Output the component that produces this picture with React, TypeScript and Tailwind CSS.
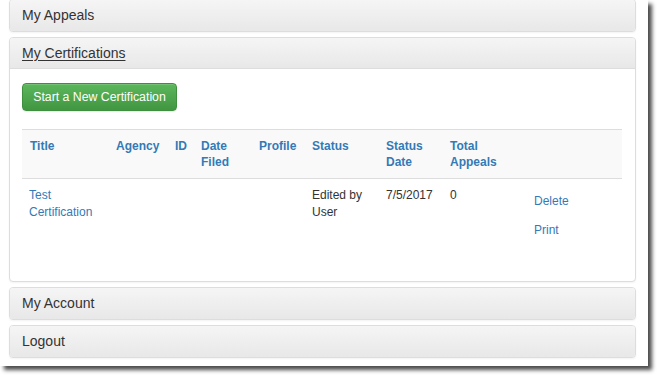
import React from "react";

function PanelHeading({ children, underline = false, last = false }: { children: React.ReactNode; underline?: boolean; last?: boolean }) {
  return (
    <div
      className={`h-[31px] px-[12px] flex items-center bg-gradient-to-b from-[#f5f5f5] to-[#e8e8e8] text-[14px] text-[#333] ${
        last ? "rounded-[3px]" : "rounded-t-[3px] border-b border-[#ddd]"
      }`}
    >
      <span className={underline ? "underline underline-offset-[2px] decoration-[#333]" : ""}>{children}</span>
    </div>
  );
}

function CollapsedPanel({ title, className = "" }: { title: string; className?: string }) {
  return (
    <div className={`border border-[#ddd] rounded-[4px] bg-white shadow-[0_1px_2px_rgba(0,0,0,0.05)] ${className}`}>
      <PanelHeading last>{title}</PanelHeading>
    </div>
  );
}

const cols = "grid grid-cols-[86px_59px_26px_58px_53px_74px_64px_84px_95px]";

export default function App() {
  const headers = ["Title", "Agency", "ID", "Date Filed", "Profile", "Status", "Status Date", "Total Appeals", ""];
  return (
    <div className="w-[657px] h-[375px] bg-white overflow-hidden font-['Liberation_Sans',Arial,sans-serif]">
      <div className="w-[648px] h-[366px] bg-white shadow-[4px_4px_4px_rgba(0,0,0,0.7)] pl-[9px] pr-[12px] flex flex-col gap-[5px] overflow-hidden">
        <CollapsedPanel title="My Appeals" className="-mt-[1px]" />

        <div className="border border-[#ddd] rounded-[4px] bg-white shadow-[0_1px_2px_rgba(0,0,0,0.05)]">
          <PanelHeading underline>My Certifications</PanelHeading>
          <div className="h-[212px] pt-[14px] pl-[12px] pr-[13px]">
            <button className="block w-[155px] h-[28px] rounded-[4px] border border-[#3e8f3e] bg-gradient-to-b from-[#5cb85c] to-[#419641] text-white text-[12.3px] shadow-[inset_0_1px_0_rgba(255,255,255,0.15),0_1px_1px_rgba(0,0,0,0.075)]">
              Start a New Certification
            </button>

            <div className="mt-[18px] w-[600px] text-[12px]">
              <div className={`${cols} bg-[#f9f9f9] border-t border-b border-[#ddd] leading-[16px]`}>
                {headers.map((h, i) => (
                  <div key={i} className="px-[8px] py-[8px] font-bold text-[#337ab7]">
                    {h.includes(" ") ? (
                      <>
                        {h.split(" ")[0]}
                        <br />
                        {h.split(" ")[1]}
                      </>
                    ) : (
                      h
                    )}
                  </div>
                ))}
              </div>
              <div className={`${cols} text-[#333] leading-[17px]`}>
                <div className="px-[7px] py-[8px] text-[#337ab7]">
                  Test
                  <br />
                  Certification
                </div>
                <div className="p-[8px]"></div>
                <div className="p-[8px]"></div>
                <div className="p-[8px]"></div>
                <div className="p-[8px]"></div>
                <div className="p-[8px]">
                  Edited by
                  <br />
                  User
                </div>
                <div className="p-[8px]">7/5/2017</div>
                <div className="p-[8px]">0</div>
                <div className="px-[8px] flex flex-col gap-[12px] pt-[14px] text-[#337ab7]">
                  <span>Delete</span>
                  <span>Print</span>
                </div>
              </div>
            </div>
          </div>
        </div>

        <CollapsedPanel title="My Account" />
        <CollapsedPanel title="Logout" />
      </div>
    </div>
  );
}
